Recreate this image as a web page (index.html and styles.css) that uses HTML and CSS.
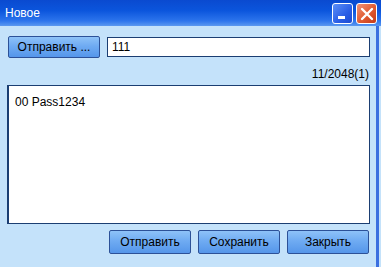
FILE: index.html
```html
<!DOCTYPE html>
<html lang="ru">
<head>
    <meta charset="UTF-8">
    <title>Новое</title>
    <link rel="stylesheet" href="styles.css">
</head>
<body>
    <div class="window">
        <div class="titlebar">
            <span class="title">Новое</span>
            <div class="controls">
                <div class="ctl min"><span class="dash"></span></div>
                <div class="ctl close">
                    <svg width="14" height="14" viewBox="0 0 14 14">
                        <path d="M2 2 L12 12 M12 2 L2 12" stroke="white" stroke-width="2.4" stroke-linecap="round"/>
                    </svg>
                </div>
            </div>
        </div>

        <div class="content">
            <div class="row">
                <button class="btn send-to">Отправить ...</button>
                <div class="field">111</div>
            </div>
            <div class="counter">11/2048(1)</div>
            <div class="message">00 Pass1234</div>
            <div class="actions">
                <button class="btn">Отправить</button>
                <button class="btn">Сохранить</button>
                <button class="btn">Закрыть</button>
            </div>
        </div>
    </div>
</body>
</html>
```

FILE: styles.css
```css
body {
    margin: 0;
    padding: 0;
    font-family: "Liberation Sans", Arial, sans-serif;
    font-size: 12px;
    background-color: #c4e2fa;
}
.window {
    width: 381px;
    height: 267px;
    display: flex;
    flex-direction: column;
}
.titlebar {
    height: 26px;
    display: flex;
    align-items: center;
    justify-content: space-between;
    padding: 0 4px 0 5px;
    background: linear-gradient(to bottom, #0a4ad0 0%, #0b55dc 40%, #2c74ec 80%, #5a98f0 100%);
    color: white;
}
.title {
    font-size: 12px;
}
.controls {
    display: flex;
    gap: 3px;
    align-self: flex-start;
    margin-top: 3px;
}
.ctl {
    width: 21px;
    height: 21px;
    box-sizing: border-box;
    border: 1px solid white;
    border-radius: 3px;
    display: flex;
    align-items: center;
    justify-content: center;
}
.min {
    background: linear-gradient(to bottom right, #5b8ff7, #2a5ee6 60%, #1c4ad0);
    align-items: flex-end;
}
.dash {
    width: 7px;
    height: 3px;
    background: white;
    margin-bottom: 4px;
    margin-right: 3px;
}
.close {
    background: linear-gradient(to bottom right, #f0947a, #e05a30 55%, #c43a18);
}
.content {
    flex: 1;
    padding: 10px 6px 0 7px;
    margin-right: 2px;
    border-right: 3px solid #3b6fe0;
    display: flex;
    flex-direction: column;
}
.row {
    display: flex;
    gap: 7px;
    align-items: center;
    padding-left: 1px;
}
.btn {
    font-family: "Liberation Sans", Arial, sans-serif;
    font-size: 12px;
    color: #000;
    height: 22px;
    padding: 0;
    border: 1px solid #2c5198;
    border-radius: 2px;
    background: linear-gradient(to bottom, #8ec2f8 0%, #6fabf2 45%, #5596ea 100%);
    cursor: pointer;
}
.send-to {
    width: 92px;
}
.field {
    flex: 1;
    height: 20px;
    box-sizing: border-box;
    background: white;
    border: 1px solid #1b3e72;
    padding: 2px 4px;
    font-size: 12px;
}
.counter {
    text-align: right;
    margin: 9px 1px 0 0;
    height: 18px;
    line-height: 14px;
}
.message {
    height: 139px;
    box-sizing: border-box;
    background: white;
    border: 1px solid #1b3e72;
    border-left: 2px solid #1b3e72;
    padding: 9px 6px;
}
.actions {
    display: flex;
    justify-content: flex-end;
    gap: 7px;
    margin-top: 6px;
    padding-right: 1px;
}
.actions .btn {
    width: 82px;
    height: 24px;
}
```
